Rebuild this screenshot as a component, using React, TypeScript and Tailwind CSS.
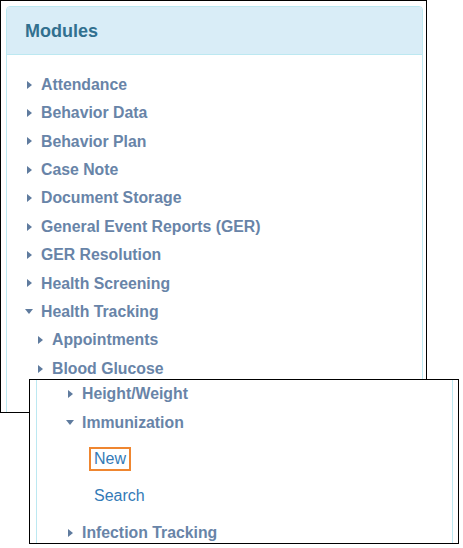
const ITEM = 'text-[#6884a8]';

type Row = { label: string; level: number; open?: boolean };

const mainRows: Row[] = [
  { label: 'Attendance', level: 1 },
  { label: 'Behavior Data', level: 1 },
  { label: 'Behavior Plan', level: 1 },
  { label: 'Case Note', level: 1 },
  { label: 'Document Storage', level: 1 },
  { label: 'General Event Reports (GER)', level: 1 },
  { label: 'GER Resolution', level: 1 },
  { label: 'Health Screening', level: 1 },
  { label: 'Health Tracking', level: 1, open: true },
  { label: 'Appointments', level: 2 },
  { label: 'Blood Glucose', level: 2 },
];

function Caret({ open }: { open?: boolean }) {
  if (open) {
    return <span className="h-0 w-0 border-x-[4.5px] border-t-[5px] border-x-transparent border-t-[#5f7b9e]" />;
  }
  return <span className="ml-[2px] h-0 w-0 border-y-[4.5px] border-l-[5px] border-y-transparent border-l-[#5f7b9e]" />;
}

function TreeRow({ row }: { row: Row }) {
  return (
    <li className={`flex h-[28.4px] items-center ${row.level === 2 ? 'pl-[11px]' : ''}`}>
      <span className="flex w-[16px] items-center">
        <Caret open={row.open} />
      </span>
      <span className={`text-[15.8px] font-bold ${ITEM}`}>{row.label}</span>
    </li>
  );
}

function Panel({ rows }: { rows: Row[] }) {
  return (
    <div className="ml-[5px] mt-[5px] w-[417px] rounded-t-[4px] border border-[#bce8f1] bg-white">
      <div className="h-[48px] rounded-t-[3px] border-b border-[#bce8f1] bg-[#d9edf7] px-[18px] text-[18px] font-bold leading-[48px] text-[#31708f]">
        Modules
      </div>
      <ul className="pb-[40px] pl-[18px] pt-[15.5px]">
        {rows.map((r) => (
          <TreeRow key={r.label} row={r} />
        ))}
      </ul>
    </div>
  );
}

export default function App() {
  return (
    <div
      className="relative h-[548px] w-[463px] overflow-hidden bg-white"
      style={{ fontFamily: '"Liberation Sans", Arial, sans-serif' }}
    >
      <div className="h-[413px] w-[427px] overflow-hidden border border-black">
        <Panel rows={mainRows} />
      </div>

      {/* zoomed inset */}
      <div className="absolute left-[29px] top-[379px] h-[165px] w-[430px] overflow-hidden border border-black bg-white">
        <div className="ml-[6px] h-[200px] w-[417px] border-x border-[#bce8f1]">
          <ul className="pl-[29px]">
            <TreeRow row={{ label: 'Height/Weight', level: 1 }} />
            <TreeRow row={{ label: 'Immunization', level: 1, open: true }} />
            <li className="py-[4px] pl-[28px]">
              <div className="flex h-[37px] items-center">
                <span className="-ml-[5px] inline-block border-2 border-[#ef8630] px-[3px] py-[1px] text-[16px] leading-[18px] text-[#337ab7]">
                  New
                </span>
              </div>
              <div className="flex h-[37px] items-center text-[16px] text-[#337ab7]">Search</div>
            </li>
            <TreeRow row={{ label: 'Infection Tracking', level: 1 }} />
          </ul>
        </div>
      </div>
    </div>
  );
}
